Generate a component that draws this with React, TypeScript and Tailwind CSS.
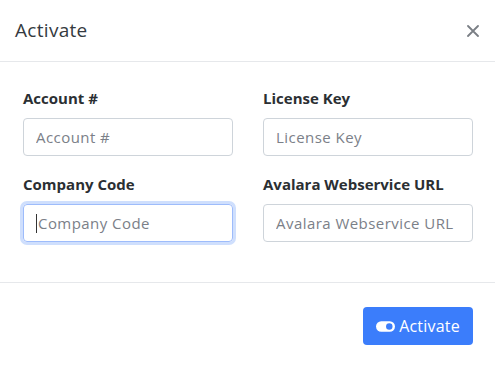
const fields = [
  { label: 'Account #', focused: false },
  { label: 'License Key', focused: false },
  { label: 'Company Code', focused: true },
  { label: 'Avalara Webservice URL', focused: false },
];

const ToggleOn = () => (
  <svg viewBox="0 0 20 11" className="w-[19px] h-[11px]">
    <rect x="0" y="0" width="20" height="11" rx="5.5" fill="white" />
    <circle cx="14" cy="5.5" r="3.4" fill="#3b7dfb" />
  </svg>
);

const Close = () => (
  <svg viewBox="0 0 12 12" className="w-[12px] h-[12px]">
    <path d="M1 1 L11 11 M11 1 L1 11" stroke="#7a7f85" strokeWidth="1.8" strokeLinecap="round" />
  </svg>
);

export default function App() {
  return (
    <div
      className="w-[495px] h-[367px] bg-white flex flex-col text-[#212529]"
      style={{ fontFamily: '"Open Sans", "Noto Sans", sans-serif' }}
    >
      {/* Header */}
      <div className="h-[62px] flex items-center justify-between pl-[15px] pr-[16px] border-b border-[#e6e8eb]">
        <h1 className="text-[19px] tracking-[0.3px] text-[#343a40] pb-[1px]">Activate</h1>
        <Close />
      </div>

      {/* Body */}
      <div className="pt-[25px] pb-[40px] pr-[22px] pl-[23px] border-b border-[#e6e8eb]">
        <div className="grid grid-cols-2 gap-x-[30px] gap-y-[17px]">
          {fields.map((f) => (
            <div key={f.label} className="flex flex-col">
              <label className="text-[15px] font-bold leading-[22px] mb-[9px] text-[#2b2f33]">
                {f.label}
              </label>
              <div
                className={
                  f.focused
                    ? 'h-[38px] rounded-[4px] border border-[#9ebcfb] ring-[3px] ring-[#cfdffd] flex items-center px-[12px]'
                    : 'h-[38px] rounded-[4px] border border-[#ced4da] flex items-center px-[12px]'
                }
              >
                {f.focused && <span className="w-px h-[19px] bg-[#333] mr-[1px]" />}
                <span className="text-[15px] tracking-[0.45px] text-[#7b8088] whitespace-nowrap overflow-hidden">
                  {f.label}
                </span>
              </div>
            </div>
          ))}
        </div>
      </div>

      {/* Footer */}
      <div className="flex-1 flex items-start justify-end pt-[24px] pr-[22px]">
        <button className="h-[38px] w-[110px] rounded-[4px] bg-[#3b7dfb] text-white text-[16px] tracking-[0.2px] flex items-center justify-center gap-[4px]">
          <ToggleOn />
          <span>Activate</span>
        </button>
      </div>
    </div>
  );
}
